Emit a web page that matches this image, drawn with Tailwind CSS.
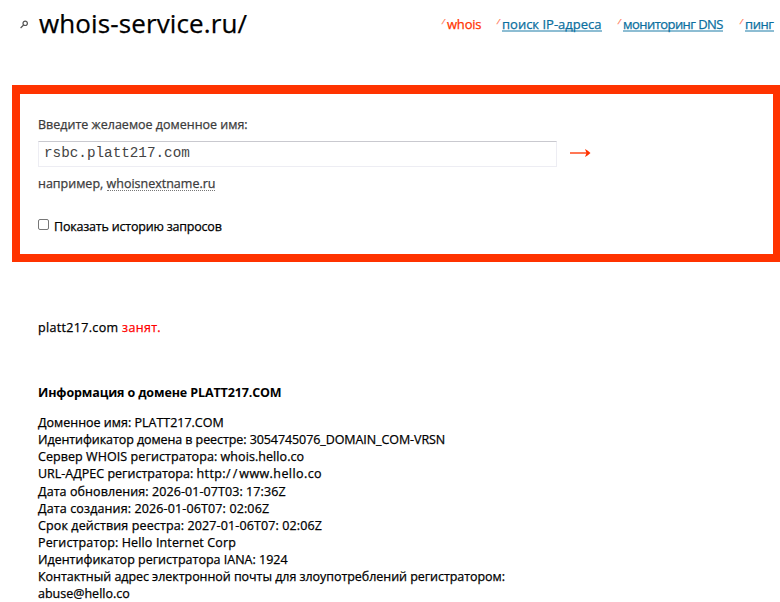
<!DOCTYPE html>
<html lang="ru">
<head>
<meta charset="UTF-8">
<meta name="viewport" content="width=device-width, initial-scale=1.0">
<title>whois-service.ru</title>
<script src="https://cdn.jsdelivr.net/npm/@tailwindcss/browser@4"></script>
</head>
<body class="bg-white text-black font-['Trebuchet_MS','Open_Sans','Noto_Sans',sans-serif] text-[12.5px] leading-[17.1px] font-medium overflow-hidden">
<div class="h-[602px] overflow-hidden [-webkit-text-stroke:0.25px]">
<header class="flex items-start h-[85px] pl-5">
<svg class="w-[9px] h-[9px] mt-5" viewBox="0 0 9 9" fill="none" stroke="#555" stroke-width="1.2"><circle cx="5.2" cy="3.3" r="2.2"/><path d="M3.6 5 0.6 8"/></svg>
<h1 class="ml-[10px] mt-[5px] w-[403px] text-[26px] leading-9 font-normal tracking-[0.12px] whitespace-nowrap">whois-service.ru/</h1>
<nav class="flex mt-[15px] text-[13px] leading-[18px] whitespace-nowrap text-[#0b6fa0]">
<div class="flex w-[55px] text-[#ff3300] tracking-[-0.2px]"><i class="w-1 mr-px text-[8px] leading-3 text-[#ff7755]">/</i><span>whois</span></div>
<div class="flex w-[121px]"><i class="w-1 mr-px text-[8px] leading-3 text-[#ff7755]">/</i><a class="h-[17px] border-b-2 border-[#8dbdd3]">поиск IP-адреса</a></div>
<div class="flex w-[122px] tracking-[-0.55px]"><i class="w-1 mr-px text-[8px] leading-3 text-[#ff7755]">/</i><a class="h-[17px] border-b-2 border-[#8dbdd3]">мониторинг DNS</a></div>
<div class="flex tracking-[-0.4px]"><i class="w-1 mr-px text-[8px] leading-3 text-[#ff7755]">/</i><a class="h-[17px] border-b-2 border-[#8dbdd3]">пинг</a></div>
</nav>
</header>
<main class="ml-3">
<form class="h-[177px] w-[769px] border-[#ff3300] border-x-8 border-t-9 border-b-8 pl-[18px] pt-[22px] text-[#3c3c3c] whitespace-nowrap">
<label class="block">Введите желаемое доменное имя:</label>
<div class="flex items-center mt-2">
<input type="text" value="rsbc.platt217.com" class="w-[519px] h-[26px] border border-[#ededf3] border-t-[#c9c9cf] px-[5px] pb-0.5 font-['Courier_New','Liberation_Mono',monospace] text-[14.3px] text-[#444] [-webkit-text-stroke:0]">
<svg class="ml-[13px] mb-0.5 w-[21px] h-[10px]" viewBox="0 0 21 10" fill="none"><path d="M0 5h18" stroke="#ff7755" stroke-width="2"/><path d="M15 1 16.5 5 15 9l2.5-1.5L20.5 5 17.5 2.5z" fill="#ff3300"/></svg>
</div>
<p class="mt-2">например, <a class="inline-block h-[15px] leading-[16px] border-b border-dotted border-[#777]">whoisnextname.ru</a></p>
<label class="flex items-center mt-[26px] text-black tracking-[-0.2px]"><input type="checkbox" class="appearance-none w-[11px] h-[11px] mr-[5px] mb-1 rounded-xs border border-[#777]">Показать историю запросов</label>
</form>
<section class="pl-[26px] pt-[57px] whitespace-nowrap">
<p class="tracking-[0.33px]">platt217.com <span class="text-[#ff0000]">занят.</span></p>
<h2 class="mt-[48px] font-bold tracking-[-0.12px] [-webkit-text-stroke:0]">Информация о домене PLATT217.COM</h2>
<div class="mt-[13px]">
<p>Доменное имя: PLATT217.COM</p>
<p class="tracking-[-0.08px]">Идентификатор домена в реестре: 3054745076_DOMAIN_COM-VRSN</p>
<p class="tracking-[0.07px]">Сервер WHOIS регистратора: whois.hello.co</p>
<p>URL-АДРЕС регистратора: <span class="tracking-[0.43px]">http:<span class="tracking-[2px]">//</span>www.hello.co</span></p>
<p class="tracking-[0.08px]">Дата обновления: 2026-01-07T03: 17:36Z</p>
<p class="tracking-[0.13px]">Дата создания: 2026-01-06T07: 02:06Z</p>
<p class="tracking-[0.12px]">Срок действия реестра: 2027-01-06T07: 02:06Z</p>
<p class="tracking-[0.14px]">Регистратор: Hello Internet Corp</p>
<p>Идентификатор регистратора IANA: 1924</p>
<p class="tracking-[-0.05px]">Контактный адрес электронной почты для злоупотреблений регистратором:</p>
<p>abuse@hello.co</p>
</div>
</section>
</main>
</div>
</body>
</html>
